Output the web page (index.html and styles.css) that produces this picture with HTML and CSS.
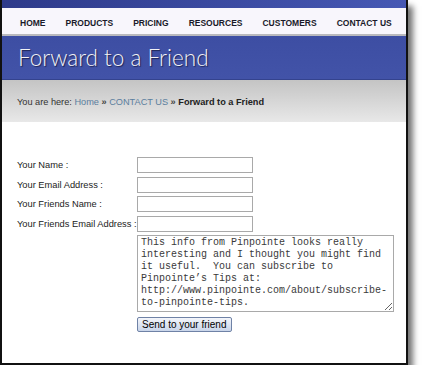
FILE: index.html
```html
<!DOCTYPE html>
<html lang="en">
<head>
    <meta charset="UTF-8">
    <meta name="viewport" content="width=device-width, initial-scale=1.0">
    <title>Forward to a Friend</title>
    <link rel="stylesheet" href="styles.css">
</head>
<body>
    <div class="frame">
        <div class="top-band"></div>
        <ul class="nav">
            <li>HOME</li>
            <li>PRODUCTS</li>
            <li>PRICING</li>
            <li>RESOURCES</li>
            <li>CUSTOMERS</li>
            <li>CONTACT US</li>
        </ul>
        <div class="banner">
            <h1>Forward to a Friend</h1>
        </div>
        <div class="crumbs">
            You are here: <a href="#">Home</a> <span class="sep">&raquo;</span> <a href="#">CONTACT US</a> <span class="sep">&raquo;</span> <b>Forward to a Friend</b>
        </div>
        <form class="forward-form">
            <label for="name">Your Name :</label>
            <input type="text" id="name">

            <label for="email">Your Email Address :</label>
            <input type="text" id="email">

            <label for="fname">Your Friends Name :</label>
            <input type="text" id="fname">

            <label for="femail">Your Friends Email Address :</label>
            <input type="text" id="femail">

            <span></span>
            <textarea id="message">This info from Pinpointe looks really interesting and I thought you might find it useful.  You can subscribe to Pinpointe’s Tips at: http://www.pinpointe.com/about/subscribe-to-pinpointe-tips.</textarea>

            <span></span>
            <div class="actions"><button type="submit">Send to your friend</button></div>
        </form>
    </div>
</body>
</html>
```

FILE: styles.css
```css
*,
*:before,
*:after {
    padding: 0;
    margin: 0;
    box-sizing: border-box;
}
body {
    background-color: #ffffff;
    font-family: 'Liberation Sans', Arial, sans-serif;
    color: #333333;
}
.frame {
    width: 408px;
    height: 365px;
    border: 2px solid #111111;
    border-top: 0;
    background-color: #ffffff;
    box-shadow: 5px 6px 6px rgba(0, 0, 0, 0.55);
}
.top-band {
    height: 8px;
    background: linear-gradient(to right, #2e3a8a, #4658b4);
}
.nav {
    list-style: none;
    display: flex;
    gap: 20px;
    height: 28px;
    padding: 4px 0 0 18px;
    align-items: center;
    background-color: #f8f6fc;
    border-bottom: 2px solid #b9b9bd;
}
.nav li {
    font-size: 8.5px;
    font-weight: bold;
    color: #1a1a2a;
}
.banner {
    height: 44px;
    padding: 8px 0 0 16px;
    background: linear-gradient(#3d4ea3, #4253a8);
    border-bottom: 1px solid #34438e;
}
.banner h1 {
    font-family: Lato, sans-serif;
    font-weight: 300;
    font-size: 22.5px;
    color: #f2f2f6;
    text-shadow: 1px 1px 1px #1c2250;
}
.crumbs {
    height: 42px;
    padding: 17px 0 0 15px;
    font-size: 9.2px;
    color: #333333;
    background: linear-gradient(#c4c4c4, #e8e8e8);
}
.crumbs a {
    color: #5b7e9e;
    text-decoration: none;
}
.crumbs .sep {
    font-weight: bold;
    color: #444444;
}
.crumbs b {
    color: #222222;
}
.forward-form {
    display: grid;
    grid-template-columns: 120px 257px;
    row-gap: 3.5px;
    align-items: center;
    padding: 35px 0 0 15px;
}
.forward-form label {
    font-size: 9.3px;
    color: #222222;
}
.forward-form input {
    width: 116px;
    height: 16px;
    border: 1px solid #a9a9a9;
    background-color: #ffffff;
}
.forward-form textarea {
    width: 257px;
    height: 77px;
    padding: 1px 3px;
    border: 1px solid #a9a9a9;
    font-family: 'Liberation Mono', 'Courier New', monospace;
    font-size: 10px;
    line-height: 12px;
    color: #3a3a3a;
}
.actions {
    display: flex;
    padding-top: 1px;
}
.forward-form button {
    height: 15px;
    padding: 0 4px;
    font-family: 'Liberation Sans', Arial, sans-serif;
    font-size: 10px;
    color: #000000;
    border: 1px solid #6f82a6;
    border-radius: 2px;
    background: linear-gradient(#f4f6fb, #c9d5ea);
}
```
